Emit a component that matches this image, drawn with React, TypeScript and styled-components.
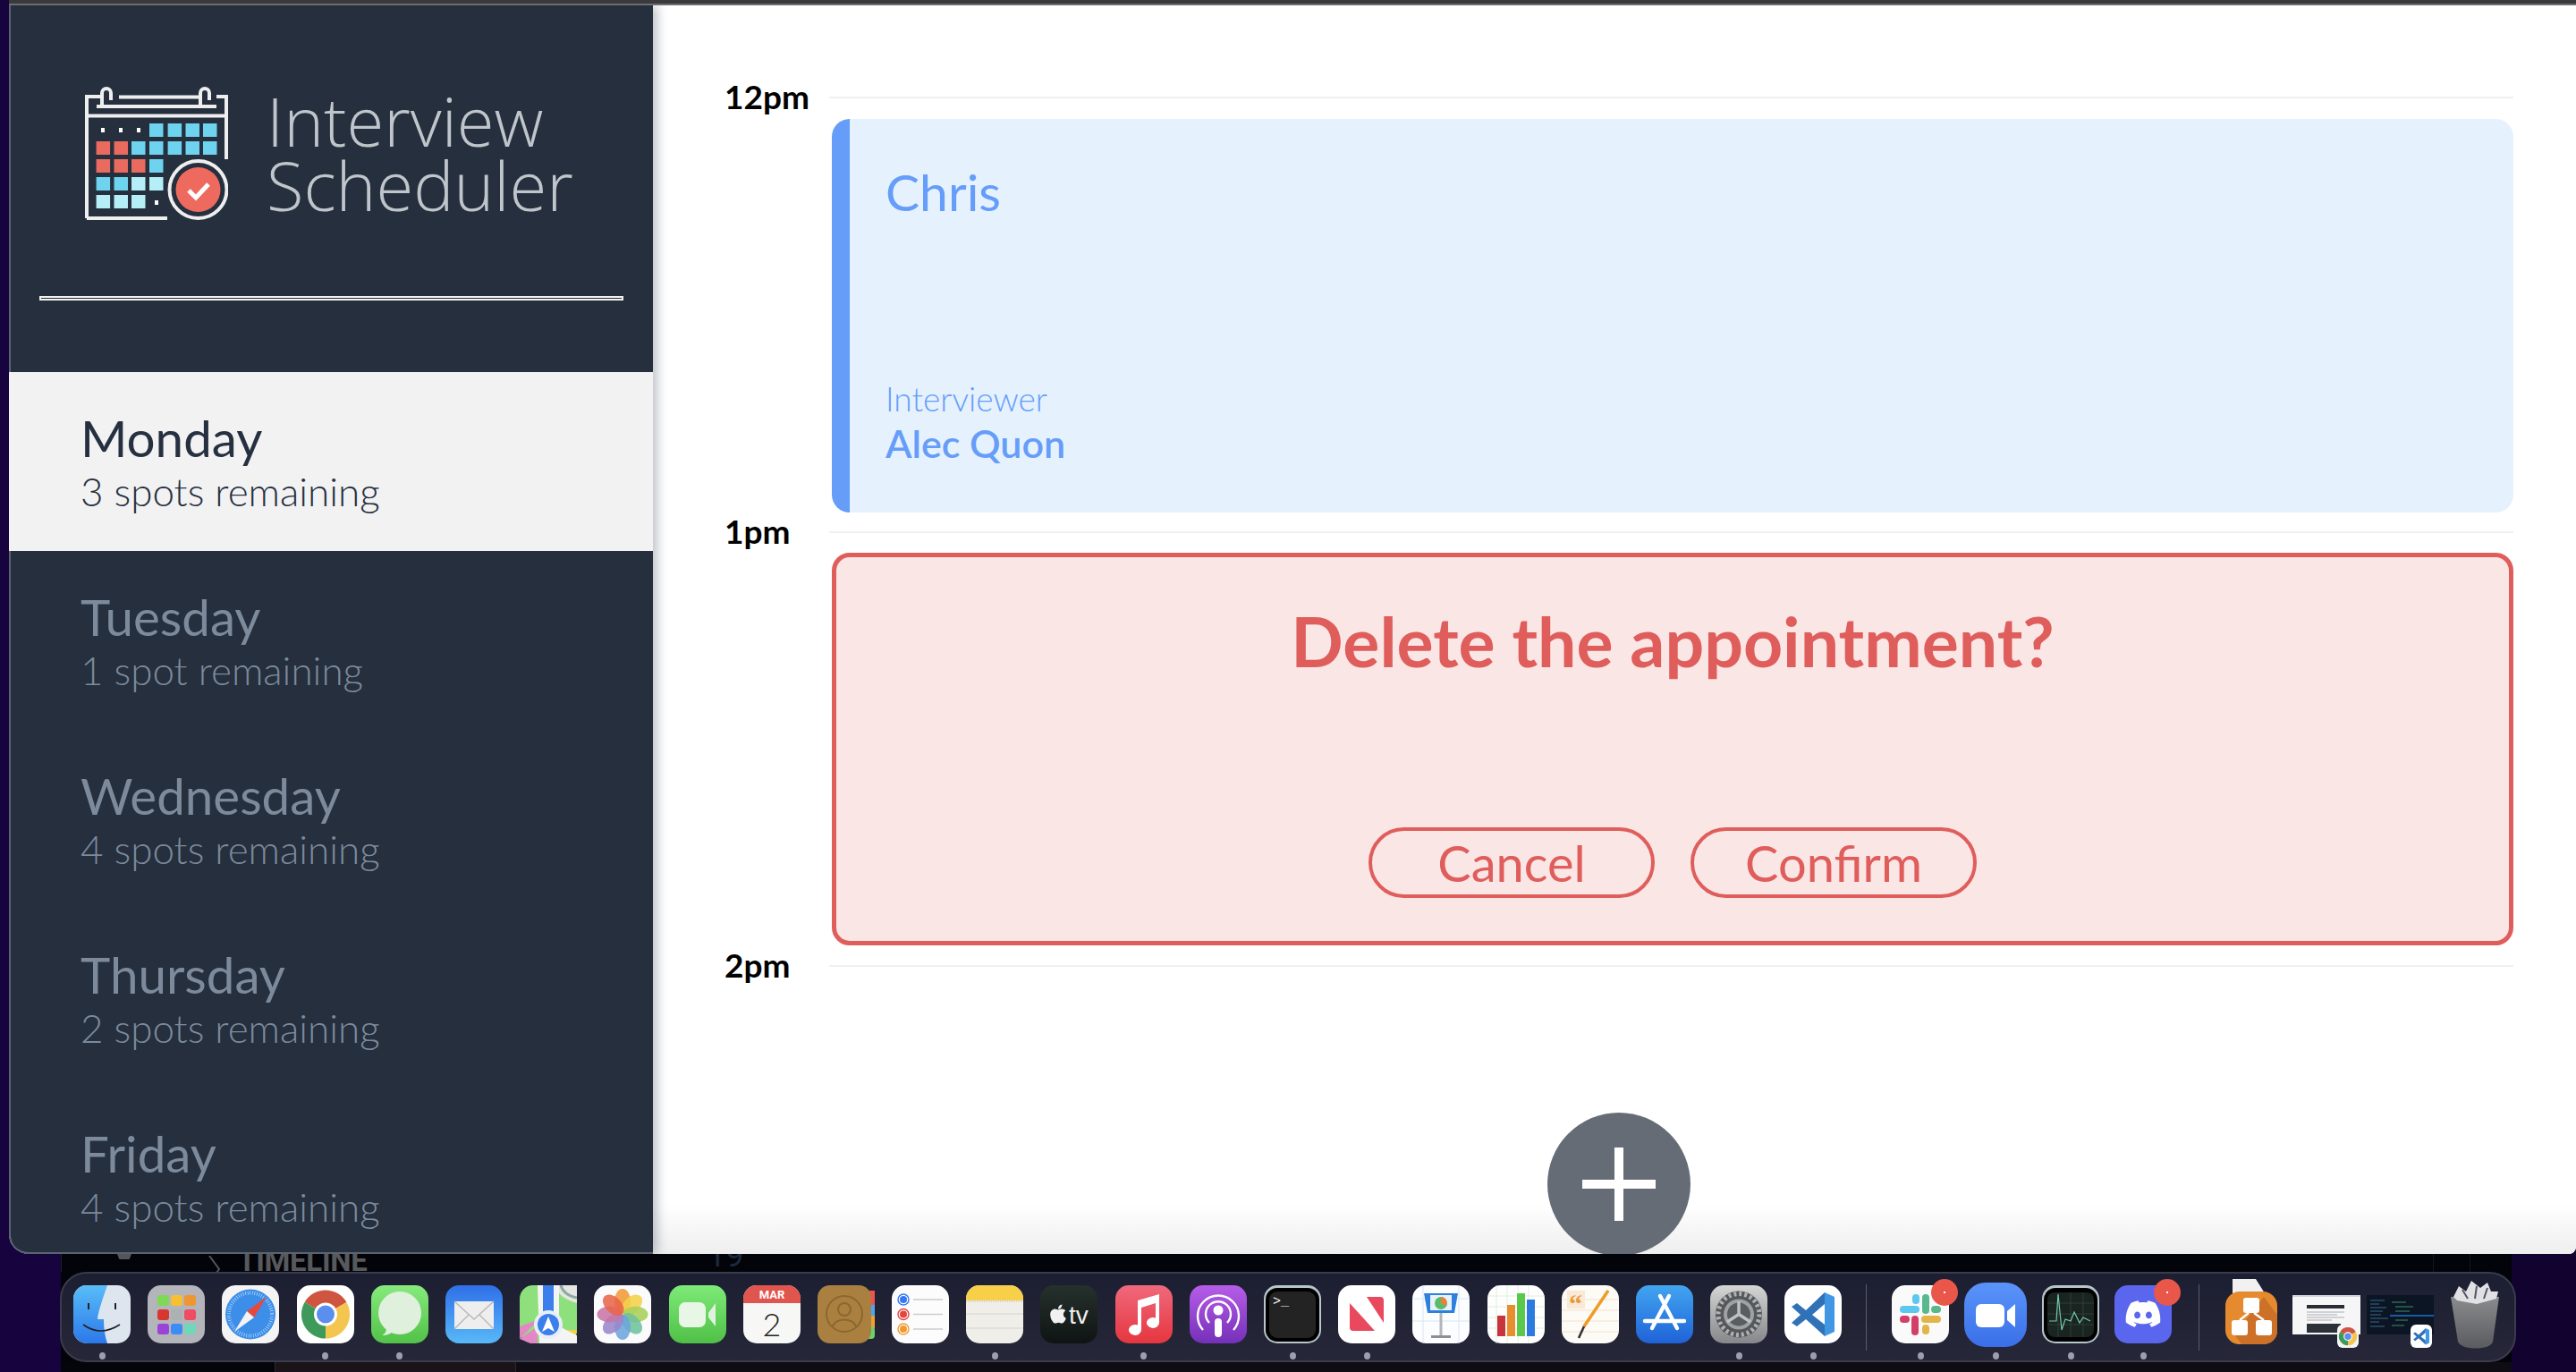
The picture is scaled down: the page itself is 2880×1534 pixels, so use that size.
import React from 'react';
import styled, { createGlobalStyle } from 'styled-components';
import { FaApple, FaDiscord } from 'react-icons/fa';

const GlobalStyle = createGlobalStyle`
  html, body {
    margin: 0;
    padding: 0;
    background: #15033a;
    font-family: Lato, "Noto Sans", sans-serif;
  }
  * { box-sizing: border-box; }
`;

const Desktop = styled.div`
  width: 2880px;
  height: 1534px;
  overflow: hidden;
  background: linear-gradient(90deg, #17033d 0, #12022f 100%);
`;

const MenuEdge = styled.div`
  height: 6px;
  margin-left: 10px;
  background: #3a3a3c;
  border-bottom: 2px solid #6d6d6f;
`;

const Window = styled.div`
  display: flex;
  height: 1396px;
  margin-left: 10px;
  overflow: hidden;
  border-radius: 0 0 8px 22px;
  background: #fff;
`;

const Sidebar = styled.aside`
  position: relative;
  z-index: 1;
  flex: none;
  width: 720px;
  height: 100%;
  overflow: hidden;
  background: #252f3e;
  box-shadow: inset 2px 0 0 #5a6370, inset 0 -2px 0 #5a6370, 5px 0 12px rgba(30, 40, 55, 0.28);
  border-bottom-left-radius: 22px;
`;

const Brand = styled.div`
  display: flex;
  align-items: flex-start;
  gap: 43px;
  height: 325px;
  padding: 90px 0 0 85px;
`;

const BrandName = styled.div`
  margin-top: 3px;
  font-family: "Open Sans", sans-serif;
  font-size: 76px;
  font-weight: 300;
  line-height: 72px;
  color: #bfc5ca;
`;

const Rule = styled.hr`
  width: 653px;
  height: 5px;
  margin: 0 0 80px 34px;
  border: 2px solid #f1f1f1;
  background: #252f3e;
`;

const DayList = styled.ul`
  margin: 0;
  padding: 0;
  list-style: none;
`;

const DayItem = styled.li<{ $selected?: boolean }>`
  height: 200px;
  padding: 39px 0 0 80px;
  color: ${(p) => (p.$selected ? '#263040' : '#7c8a9b')};
  background: ${(p) => (p.$selected ? '#f2f2f2' : 'transparent')};
`;

const DayName = styled.h2`
  margin: 0;
  font-size: 56.5px;
  font-weight: 400;
  line-height: 69px;
`;

const DaySpots = styled.h3`
  margin: 0;
  font-size: 44px;
  font-weight: 300;
  line-height: 50px;
`;

const Main = styled.main`
  flex: 1;
  height: 100%;
  padding: 102px 70px 0 80px;
  background: linear-gradient(180deg, #fff 0, #fff 1340px, #eeeeee 1396px);
`;

const Row = styled.section<{ $height: number }>`
  display: grid;
  grid-template-columns: 117px 1fr;
  height: ${(p) => p.$height}px;
`;

const TimeLabel = styled.h4`
  margin: -22px 0 0;
  font-size: 37px;
  font-weight: 700;
  line-height: 44px;
  color: #000;
`;

const Slot = styled.div`
  border-top: 2px solid #f0f0f0;
  padding: 22.5px 0 0 3px;
`;

const ShowCard = styled.article`
  display: flex;
  flex-direction: column;
  height: 440px;
  padding: 46px 0 50px 40px;
  border-left: 20px solid #659df9;
  border-radius: 20px;
  background: #e6f1fe;
  color: #659df9;
`;

const StudentName = styled.h2`
  margin: 0;
  font-size: 57px;
  font-weight: 400;
  line-height: 70px;
`;

const InterviewerBlock = styled.section`
  margin-top: auto;
`;

const InterviewerLabel = styled.h4`
  margin: 0;
  font-size: 37px;
  font-weight: 300;
  line-height: 46px;
`;

const InterviewerName = styled.h3`
  margin: 0;
  font-size: 43px;
  font-weight: 600;
  line-height: 54px;
`;

const ConfirmCard = styled.article`
  display: flex;
  flex-direction: column;
  align-items: center;
  height: 439px;
  padding: 51px 0 48px;
  border: 5px solid #df5e5c;
  border-radius: 20px;
  background: #fae6e5;
  color: #df5e5c;
`;

const ConfirmTitle = styled.h1`
  margin: 0;
  font-size: 77px;
  font-weight: 700;
  line-height: 84px;
`;

const Actions = styled.div`
  display: flex;
  gap: 40px;
  margin-top: auto;
`;

const ActionButton = styled.button`
  width: 320px;
  height: 79px;
  padding: 0;
  border: 4.5px solid #df5e5c;
  border-radius: 40px;
  background: transparent;
  color: #df5e5c;
  font-family: inherit;
  font-size: 56px;
  line-height: 1;
`;

const AddButton = styled.button`
  display: flex;
  align-items: center;
  justify-content: center;
  width: 160px;
  height: 160px;
  margin-left: 920px;
  padding: 0;
  border: 0;
  border-radius: 50%;
  background: #666c76;
`;

const Editor = styled.div`
  height: 132px;
  margin: 0 72px 0 68px;
  background: #02040a;
`;

const BackStrip = styled.div`
  position: relative;
  height: 20px;
  overflow: hidden;
  border-left: 1px solid #1d2026;
  background:
    linear-gradient(#14161c, #14161c) 2651px 0 / 1px 100% no-repeat,
    linear-gradient(#14161c, #14161c) 2692px 0 / 1px 100% no-repeat;
`;

const Tick = styled.span`
  position: absolute;
  left: 62px;
  top: 0;
  width: 16px;
  height: 6px;
  background: #55565a;
  clip-path: polygon(0 0, 100% 0, 85% 100%, 15% 100%);
`;

const Chevron = styled.svg`
  position: absolute;
  left: 164px;
  top: 2px;
  width: 14px;
  height: 30px;
`;

const Crumb = styled.span`
  position: absolute;
  left: 197px;
  top: -5px;
  font-family: Roboto, sans-serif;
  font-size: 33px;
  font-weight: 700;
  line-height: 26px;
  letter-spacing: -0.3px;
  color: #58595c;
`;

const LineNumber = styled.span`
  position: absolute;
  left: 722px;
  top: -18px;
  font-family: Roboto, sans-serif;
  font-size: 36px;
  line-height: 40px;
  color: #1c2a3b;
`;

const Dock = styled.nav`
  display: flex;
  height: 101px;
  margin: 0 -5px 0 -1px;
  padding-left: 13px;
  border: 2px solid #3a3c4d;
  border-radius: 30px;
  background: linear-gradient(180deg, #1c1e31 0, #262839 100%);
`;

const DockGroup = styled.div<{ $gap: number }>`
  display: flex;
  gap: ${(p) => p.$gap}px;
`;

const DockSlot = styled.div<{ $top: number; $after?: number }>`
  position: relative;
  flex: none;
  padding-top: ${(p) => p.$top}px;
  margin-right: ${(p) => p.$after || 0}px;
`;

const Indicator = styled.span`
  position: absolute;
  left: 50%;
  top: 88px;
  width: 7px;
  height: 8px;
  margin-left: -3.5px;
  border-radius: 50%;
  background: #9c9eb2;
`;

const Badge = styled.span`
  position: absolute;
  right: -10px;
  top: 6px;
  width: 30px;
  height: 30px;
  border-radius: 50%;
  background: #e8574a;
  &::after {
    content: '';
    position: absolute;
    left: 14px;
    top: 14px;
    width: 2px;
    height: 2px;
    background: #fff;
  }
`;

const DockDivider = styled.div<{ $left: number; $right: number }>`
  flex: none;
  width: 1px;
  height: 74px;
  margin: 12px ${(p) => p.$right}px 0 ${(p) => p.$left}px;
  background: #5a5c6c;
`;

const Under = styled.div`
  display: grid;
  grid-template-columns: 240px 269px 1fr;
  height: 11px;
  & > span { border-right: 1px solid #2a2a2e; }
  & > span:nth-child(1) { background: #03050b; }
  & > span:nth-child(2) { background: #1a1418; }
  & > span:nth-child(3) { background: #100c13; border: 0; }
`;

function Logo() {
  const xs = [12.6, 32.5, 52, 72, 92.6, 112.5, 132];
  const ys = [42, 62, 82, 102, 122];
  const blue = '#6dd3ee';
  const red = '#e96a5f';
  const light = '#b6eef8';
  const cells: [number, number, string][] = [
    [3, 0, blue], [4, 0, blue], [5, 0, blue], [6, 0, blue],
    [0, 1, red], [1, 1, red], [2, 1, blue], [3, 1, blue], [4, 1, blue], [5, 1, blue], [6, 1, blue],
    [0, 2, red], [1, 2, red], [2, 2, red], [3, 2, blue],
    [0, 3, blue], [1, 3, blue], [2, 3, light], [3, 3, light],
    [0, 4, light], [1, 4, light], [2, 4, light],
  ];
  const line = '#eeeeee';
  return (
    <svg width="160" height="150" viewBox="0 0 160 150" style={{ flex: 'none' }}>
      {cells.map(([c, r, fill]) => (
        <rect key={`${c}-${r}`} x={xs[c]} y={ys[r]} width="15.5" height="15" fill={fill} />
      ))}
      <rect x="18" y="47" width="4" height="5" fill="#fff" />
      <rect x="38" y="47" width="4" height="5" fill="#fff" />
      <rect x="58" y="47" width="4" height="5" fill="#fff" />
      <rect x="78" y="128" width="4" height="5" fill="#fff" />
      <path d="M2 148V12H17M38 12.5H128M147 12H158V82M2 33.5H158M13 23H147" fill="none" stroke={line} strokeWidth="4" />
      <path d="M2 148H92" stroke={line} strokeWidth="4" />
      <path d="M19 22V8a5 5 0 0 1 10 0V16M129 22V8a5 5 0 0 1 10 0V16" fill="none" stroke={line} strokeWidth="4" />
      <circle cx="126.5" cy="116" r="32" fill="#252f3e" stroke={line} strokeWidth="4" />
      <circle cx="126.5" cy="116" r="25" fill="#ee6a5f" />
      <path d="M116 117l8 8 14-15" fill="none" stroke="#fff" strokeWidth="5" />
    </svg>
  );
}

const Tile = ({ fill, rx = 15 }: { fill: string; rx?: number }) => <rect width="64" height="65" rx={rx} fill={fill} />;

const Grad = ({ id, from, to }: { id: string; from: string; to: string }) => (
  <defs>
    <linearGradient id={id} x1="0" y1="0" x2="0" y2="1">
      <stop offset="0" stopColor={from} />
      <stop offset="1" stopColor={to} />
    </linearGradient>
  </defs>
);

const Icon = ({ w = 64, h = 65, children }: { w?: number; h?: number; children: React.ReactNode }) => (
  <svg width={w} height={h} viewBox={`0 0 ${w} ${h}`} style={{ display: 'block' }}>
    {children}
  </svg>
);

const VsMark = () => (
  <>
    <path d="M45 8L24 28L14 20L8 24L18 33L8 42L14 46L24 38L45 57V44L31 33L45 21Z" fill="#2f72b8" />
    <path d="M45 8L56 13V52L45 57Z" fill="#4297e4" />
  </>
);

const ChromeMark = () => (
  <>
    <path d="M32 32.5L8.6 19A27 27 0 0 1 55.4 19Z" fill="#cf5540" />
    <path d="M32 32.5L55.4 19A27 27 0 0 1 32 59.5Z" fill="#f4c64f" />
    <path d="M32 32.5L32 59.5A27 27 0 0 1 8.6 19Z" fill="#3e9a5a" />
    <circle cx="32" cy="32.5" r="13" fill="#fff" />
    <circle cx="32" cy="32.5" r="10" fill="#5a8ff0" />
  </>
);

const petals = ['#f09a37', '#f4d24a', '#a8cf5a', '#6fc19c', '#6ca5dc', '#9a86c9', '#c875a5', '#e8654a'];

const dockMain: { key: string; dot?: boolean; node: React.ReactNode }[] = [
  {
    key: 'finder',
    dot: true,
    node: (
      <Icon>
        <Grad id="finder" from="#58bdf8" to="#2c78ea" />
        <Tile fill="#dde5ee" />
        <path d="M15 0H38C33 15 28 28 27 38H34C34 48 35 56 38 65H15A15 15 0 0 1 0 50V15A15 15 0 0 1 15 0Z" fill="url(#finder)" />
        <path d="M17 20V27M47 20V27" stroke="#222" strokeWidth="2" />
        <path d="M11 44Q30 58 52 44" fill="none" stroke="#222" strokeWidth="1.6" />
      </Icon>
    ),
  },
  {
    key: 'launchpad',
    node: (
      <Icon>
        <Tile fill="#b4b4bb" />
        {['#7ed957', '#f5c032', '#ee9631', '#d9362f', '#aab2b2', '#ee4d63', '#9a43d8', '#3b8df5', '#6fd8b8'].map((c, i) => (
          <rect key={c} x={11 + (i % 3) * 15} y={11 + Math.floor(i / 3) * 16} width="13" height="12" rx="3" fill={c} />
        ))}
      </Icon>
    ),
  },
  {
    key: 'safari',
    node: (
      <Icon>
        <Tile fill="#f4f4f4" />
        <circle cx="32" cy="32.5" r="28" fill="#3d8ee8" />
        <circle cx="32" cy="32.5" r="24" fill="none" stroke="#d8ecff" strokeWidth="4" strokeDasharray="0.6 2" />
        <polygon points="50,13 36,36 28,29" fill="#e8483c" />
        <polygon points="14,52 36,36 28,29" fill="#f3f3f3" />
      </Icon>
    ),
  },
  {
    key: 'chrome',
    dot: true,
    node: (
      <Icon>
        <Tile fill="#fff" />
        <ChromeMark />
      </Icon>
    ),
  },
  {
    key: 'messages',
    dot: true,
    node: (
      <Icon>
        <Grad id="messages" from="#86ea7c" to="#52c248" />
        <Tile fill="url(#messages)" />
        <ellipse cx="32" cy="31" rx="24" ry="24" fill="#dff0dc" />
        <path d="M17 48C17 52 15 55 12 56C18 56 22 54 25 51Z" fill="#dff0dc" />
      </Icon>
    ),
  },
  {
    key: 'mail',
    node: (
      <Icon>
        <Grad id="mail" from="#2f6fe8" to="#58b8f8" />
        <Tile fill="url(#mail)" />
        <rect x="10" y="18" width="44" height="31" rx="2" fill="#eeeeee" />
        <path d="M10 18L32 38L54 18M10 49L26 33M54 49L38 33" fill="none" stroke="#b8b8b8" strokeWidth="1.4" />
      </Icon>
    ),
  },
  {
    key: 'maps',
    node: (
      <Icon>
        <Tile fill="#8ee07c" />
        <path d="M0 46L22 38L0 60ZM0 60L20 46V65H12Z" fill="#e388c4" />
        <path d="M38 50H64V50A15 15 0 0 1 50 65H38Z" fill="#f3cf45" />
        <path d="M40 0H64V20C50 16 42 10 40 0Z" fill="#e3e6e3" />
        <path d="M46 0C48 8 54 12 64 14" fill="none" stroke="#8ea9a0" strokeWidth="3" />
        <path d="M20 0H44V65H38L22 65Z" fill="#f4f4f4" />
        <rect x="26" y="0" width="12" height="34" fill="#3b7fec" />
        <path d="M40 44L64 56V65H44Z" fill="#f4f4f4" />
        <circle cx="32" cy="44" r="16" fill="#e8eef6" />
        <circle cx="32" cy="44" r="12" fill="#3b7fec" />
        <path d="M32 35L39 52L32 48L25 52Z" fill="#fff" />
      </Icon>
    ),
  },
  {
    key: 'photos',
    node: (
      <Icon>
        <Tile fill="#fbfbfb" />
        {petals.map((c, i) => (
          <ellipse key={c} cx="32" cy="18" rx="9" ry="14" fill={c} opacity="0.88" transform={`rotate(${i * 45} 32 32.5)`} />
        ))}
      </Icon>
    ),
  },
  {
    key: 'facetime',
    node: (
      <Icon>
        <Grad id="ft" from="#7eea78" to="#4fc047" />
        <Tile fill="url(#ft)" />
        <rect x="11" y="19" width="30" height="28" rx="7" fill="#e8f6e6" />
        <path d="M44 31L52 20V46L44 36Z" fill="#e0f2de" />
      </Icon>
    ),
  },
  {
    key: 'calendar',
    node: (
      <Icon>
        <Tile fill="#f7f7f5" />
        <path d="M15 0H49A15 15 0 0 1 64 15V20H0V15A15 15 0 0 1 15 0Z" fill="#e0554d" />
        <text x="32" y="15" textAnchor="middle" fontSize="13" fontWeight="700" fill="#fff" fontFamily="Roboto">MAR</text>
        <text x="32" y="57" textAnchor="middle" fontSize="36" fontWeight="300" fill="#222" fontFamily="Lato">2</text>
      </Icon>
    ),
  },
  {
    key: 'contacts',
    node: (
      <Icon>
        <rect x="50" y="6" width="14" height="18" fill="#ef5350" />
        <rect x="50" y="22" width="14" height="14" fill="#4aa5ef" />
        <rect x="50" y="34" width="14" height="14" fill="#f0a030" />
        <rect x="50" y="46" width="14" height="14" rx="4" fill="#6fcf6a" />
        <rect width="60" height="65" rx="14" fill="#a9803f" />
        <circle cx="30" cy="32" r="20" fill="none" stroke="#8b6730" strokeWidth="2" />
        <circle cx="30" cy="27" r="7" fill="none" stroke="#8b6730" strokeWidth="2" />
        <path d="M17 46C20 36 40 36 43 46" fill="none" stroke="#8b6730" strokeWidth="2" />
      </Icon>
    ),
  },
  {
    key: 'reminders',
    node: (
      <Icon>
        <Tile fill="#fcfcfc" />
        {[['#3478f6', 16], ['#e5453d', 32.5], ['#ef9a2f', 49]].map(([c, y]) => (
          <g key={c as string}>
            <circle cx="13" cy={y as number} r="6" fill="none" stroke={c as string} strokeWidth="1.4" />
            <circle cx="13" cy={y as number} r="4" fill={c as string} />
            <path d={`M24 ${y}H57`} stroke="#cccccc" strokeWidth="1.6" />
          </g>
        ))}
      </Icon>
    ),
  },
  {
    key: 'notes',
    dot: true,
    node: (
      <Icon>
        <Tile fill="#efeee8" />
        <path d="M15 0H49A15 15 0 0 1 64 15V17H0V15A15 15 0 0 1 15 0Z" fill="#f8cf48" />
        <path d="M0 18H64" stroke="#bcbbb4" strokeWidth="1" strokeDasharray="1 1" />
        <path d="M0 32H64M0 48H64" stroke="#dddcd6" strokeWidth="1.4" />
      </Icon>
    ),
  },
  {
    key: 'tv',
    node: (
      <Icon>
        <Grad id="tv" from="#26312c" to="#0f1412" />
        <Tile fill="url(#tv)" />
        <FaApple x={8} y={20} size={24} color="#f1f1f1" />
        <text x="32" y="43" fontSize="28" fill="#efefef" fontFamily="Liberation Sans">tv</text>
      </Icon>
    ),
  },
  {
    key: 'music',
    dot: true,
    node: (
      <Icon>
        <Grad id="music" from="#f0697c" to="#e5363f" />
        <Tile fill="url(#music)" />
        <path d="M25 17L49 10V42A7 6 0 1 1 45 36.5V20L29 25V50A7 6 0 1 1 25 44.5Z" fill="#fff" />
      </Icon>
    ),
  },
  {
    key: 'podcasts',
    node: (
      <Icon>
        <Grad id="pod" from="#b65de8" to="#7530b8" />
        <Tile fill="url(#pod)" />
        <path d="M15 50A23 23 0 1 1 49 50M22 42A14 14 0 1 1 42 42" fill="none" stroke="#fff" strokeWidth="2.4" />
        <circle cx="32" cy="28" r="5.5" fill="#fff" />
        <rect x="28" y="37" width="8" height="21" rx="4" fill="#fff" />
      </Icon>
    ),
  },
  {
    key: 'terminal',
    dot: true,
    node: (
      <Icon>
        <Tile fill="#b8c6cc" />
        <rect x="2" y="3" width="60" height="60" rx="13" fill="#000" />
        <rect x="6" y="7" width="52" height="52" rx="9" fill="#232323" />
        <text x="10" y="22" fontSize="15" fill="#fff" fontFamily="Liberation Mono">{'>_'}</text>
      </Icon>
    ),
  },
  {
    key: 'news',
    dot: true,
    node: (
      <Icon>
        <Tile fill="#fff" />
        <rect x="13" y="13" width="38" height="38" rx="4" fill="#e9495d" />
        <polygon points="19,13 32,13 51,42 51,51 41,51 13,20 13,13" fill="#fff" />
      </Icon>
    ),
  },
  {
    key: 'keynote',
    node: (
      <Icon>
        <Tile fill="#fbfdff" />
        <path d="M0 15H64M0 40H64M12 0V65M52 0V65" stroke="#d8e6f3" strokeWidth="1" />
        <polygon points="13,9 51,9 47,31 17,31" fill="#2f7fe0" />
        <rect x="20" y="11" width="24" height="17" fill="#e8f2fb" />
        <circle cx="32" cy="20" r="7" fill="#5cbb6a" />
        <path d="M32 20V13A7 7 0 0 1 38 23Z" fill="#ee7d3a" />
        <rect x="30.5" y="31" width="3" height="26" fill="#b0b6bc" />
        <rect x="21" y="56" width="22" height="3" fill="#8d8f92" />
      </Icon>
    ),
  },
  {
    key: 'numbers',
    node: (
      <Icon>
        <Tile fill="#fdfefd" />
        <path d="M0 12H64M0 24H64M0 36H64M0 48H64M10 0V65M22 0V65M34 0V65M46 0V65" stroke="#d8edd6" strokeWidth="0.8" />
        <rect x="11" y="34" width="9" height="23" fill="#c8333d" />
        <rect x="22" y="22" width="9" height="35" fill="#e78f2f" />
        <rect x="33" y="9" width="9" height="48" fill="#5ac84c" />
        <rect x="44" y="16" width="9" height="41" fill="#2c79e0" />
      </Icon>
    ),
  },
  {
    key: 'pages',
    node: (
      <Icon>
        <Tile fill="#fcfbf6" />
        <path d="M0 16H64M0 28H64M0 40H64M0 52H64" stroke="#f7dcc0" strokeWidth="0.8" />
        <rect x="6" y="6" width="20" height="20" fill="#f9e9d6" />
        <text x="8" y="31" fontSize="30" fontWeight="700" fill="#ea9a3a" fontFamily="Liberation Serif">“</text>
        <path d="M52 6L25 46" stroke="#ee9b28" strokeWidth="3.6" />
        <path d="M25 46L19 59" stroke="#333" strokeWidth="2.6" />
      </Icon>
    ),
  },
  {
    key: 'appstore',
    node: (
      <Icon>
        <Grad id="as" from="#42a5f0" to="#1f62d8" />
        <Tile fill="url(#as)" />
        <path d="M37 12L18 48M27 12L46 48M10 40H54" stroke="#fff" strokeWidth="4.4" strokeLinecap="round" fill="none" />
      </Icon>
    ),
  },
  {
    key: 'prefs',
    dot: true,
    node: (
      <Icon>
        <Grad id="pf" from="#d4d6d4" to="#85878a" />
        <Tile fill="url(#pf)" />
        <circle cx="32" cy="32.5" r="26" fill="#55585a" />
        <circle cx="32" cy="32.5" r="23" fill="none" stroke="#b0b3b3" strokeWidth="5" strokeDasharray="3 3" />
        <circle cx="32" cy="32.5" r="17" fill="#9ea2a3" />
        <circle cx="32" cy="32.5" r="13" fill="#5a5d60" />
        <path d="M32 32.5V18M32 32.5L19 41M32 32.5L45 41" stroke="#bfc2c2" strokeWidth="3.4" />
      </Icon>
    ),
  },
  {
    key: 'vscode',
    dot: true,
    node: (
      <Icon>
        <Tile fill="#fff" />
        <VsMark />
      </Icon>
    ),
  },
];

export default function App() {
  return (
    <Desktop>
      <GlobalStyle />
      <MenuEdge />
      <Window>
        <Sidebar>
          <Brand>
            <Logo />
            <BrandName>
              Interview
              <br />
              Scheduler
            </BrandName>
          </Brand>
          <Rule />
          <DayList>
            <DayItem $selected>
              <DayName>Monday</DayName>
              <DaySpots>3 spots remaining</DaySpots>
            </DayItem>
            <DayItem>
              <DayName>Tuesday</DayName>
              <DaySpots>1 spot remaining</DaySpots>
            </DayItem>
            <DayItem>
              <DayName>Wednesday</DayName>
              <DaySpots>4 spots remaining</DaySpots>
            </DayItem>
            <DayItem>
              <DayName>Thursday</DayName>
              <DaySpots>2 spots remaining</DaySpots>
            </DayItem>
            <DayItem>
              <DayName>Friday</DayName>
              <DaySpots>4 spots remaining</DaySpots>
            </DayItem>
          </DayList>
        </Sidebar>
        <Main>
          <Row $height={485.5}>
            <TimeLabel>12pm</TimeLabel>
            <Slot>
              <ShowCard>
                <StudentName>Chris</StudentName>
                <InterviewerBlock>
                  <InterviewerLabel>Interviewer</InterviewerLabel>
                  <InterviewerName>Alec Quon</InterviewerName>
                </InterviewerBlock>
              </ShowCard>
            </Slot>
          </Row>
          <Row $height={485.5}>
            <TimeLabel>1pm</TimeLabel>
            <Slot>
              <ConfirmCard>
                <ConfirmTitle>Delete the appointment?</ConfirmTitle>
                <Actions>
                  <ActionButton>Cancel</ActionButton>
                  <ActionButton>Confirm</ActionButton>
                </Actions>
              </ConfirmCard>
            </Slot>
          </Row>
          <Row $height={165}>
            <TimeLabel>2pm</TimeLabel>
            <Slot />
          </Row>
          <AddButton aria-label="Add">
            <svg width="82" height="82" viewBox="0 0 82 82">
              <path d="M41 0V82M0 41H82" stroke="#fff" strokeWidth="10" />
            </svg>
          </AddButton>
        </Main>
      </Window>
      <Editor>
        <BackStrip>
          <Tick />
          <Chevron viewBox="0 0 14 30">
            <path d="M1 0L12 15L1 30" fill="none" stroke="#55565a" strokeWidth="2" />
          </Chevron>
          <Crumb>TIMELINE</Crumb>
          <LineNumber>19</LineNumber>
        </BackStrip>
        <Dock>
          <DockGroup $gap={19.2}>
            {dockMain.map((app) => (
              <DockSlot key={app.key} $top={13}>
                {app.node}
                {app.dot && <Indicator />}
              </DockSlot>
            ))}
          </DockGroup>
          <DockDivider $left={27} $right={28} />
          <DockGroup $gap={17}>
            <DockSlot $top={13}>
              <Icon>
                <Tile fill="#fafafa" />
                <rect x="9" y="23" width="22" height="8" rx="4" fill="#5cc8ef" />
                <rect x="23" y="10" width="8" height="11" rx="4" fill="#5cc8ef" />
                <rect x="34" y="10" width="8" height="22" rx="4" fill="#58b98c" />
                <rect x="44" y="23" width="11" height="8" rx="4" fill="#58b98c" />
                <rect x="33" y="34" width="22" height="8" rx="4" fill="#e3b548" />
                <rect x="34" y="44" width="8" height="11" rx="4" fill="#e3b548" />
                <rect x="22" y="34" width="8" height="22" rx="4" fill="#d23f67" />
                <rect x="9" y="34" width="11" height="8" rx="4" fill="#d23f67" />
              </Icon>
              <Badge />
              <Indicator />
            </DockSlot>
            <DockSlot $top={10}>
              <Icon w={70} h={72}>
                <Grad id="zm" from="#5a94f9" to="#3a6fe8" />
                <rect width="70" height="72" rx="24" fill="url(#zm)" />
                <rect x="13" y="24" width="32" height="26" rx="6" fill="#fff" />
                <path d="M48 32L57 24V50L48 42Z" fill="#fff" />
              </Icon>
              <Indicator />
            </DockSlot>
            <DockSlot $top={13}>
              <Icon>
                <Tile fill="#b6c6cb" />
                <rect x="2" y="3" width="60" height="60" rx="13" fill="#000" />
                <rect x="6" y="8" width="52" height="50" rx="8" fill="#1a2420" />
                <path d="M6 20H58M6 32H58M6 44H58M18 8V58M32 8V58M46 8V58" stroke="#33473f" strokeWidth="0.8" />
                <path d="M8 40H16L18 10L22 50L26 38L32 40L36 30L42 42L46 36L54 40" fill="none" stroke="#72c8ae" strokeWidth="1.2" />
              </Icon>
              <Indicator />
            </DockSlot>
            <DockSlot $top={13}>
              <Icon>
                <Tile fill="#5b66ee" />
                <FaDiscord x={11} y={11} size={42} color="#fff" />
              </Icon>
              <Badge />
              <Indicator />
            </DockSlot>
          </DockGroup>
          <DockDivider $left={30} $right={29} />
          <DockGroup $gap={7}>
            <DockSlot $top={6} $after={10}>
              <Icon w={58} h={73}>
                <path d="M8 0H34L44 16H8Z" fill="#f1f1f1" />
                <path d="M16 14H42A16 16 0 0 1 58 30V58A15 15 0 0 1 43 73H16A16 16 0 0 1 0 58V30A16 16 0 0 1 16 14Z" fill="#e58a2e" />
                <path d="M43 20L58 40V58A15 15 0 0 1 43 73H18L10 62Z" fill="#cd7129" />
                <rect x="20" y="21" width="18" height="17" rx="3" fill="#fff" />
                <rect x="7" y="46" width="18" height="17" rx="3" fill="#fff" />
                <rect x="34" y="46" width="18" height="17" rx="3" fill="#fff" />
                <path d="M26 38L16 46M32 38L43 46" stroke="#fff" strokeWidth="2.4" />
              </Icon>
            </DockSlot>
            <DockSlot $top={13}>
              <Icon w={76} h={70}>
                <rect y="11" width="76" height="44" fill="#f6f6f6" />
                <rect y="11" width="76" height="2" fill="#cfd4dc" />
                <rect x="16" y="22" width="42" height="4" fill="#2a2d33" />
                <path d="M16 30H58M16 33H50M16 36H58M16 39H44" stroke="#a9acb2" strokeWidth="1" />
                <rect x="16" y="43" width="38" height="10" fill="#2c3038" />
                <rect x="50" y="44" width="24" height="26" rx="6" fill="#f5f5f5" />
                <g transform="translate(50 45) scale(0.375)">
                  <ChromeMark />
                </g>
              </Icon>
            </DockSlot>
            <DockSlot $top={13} $after={11}>
              <Icon w={75} h={70}>
                <rect y="11" width="75" height="44" fill="#0b1524" />
                <path d="M4 17H20M4 21H14M4 25H22M4 29H18M4 33H16M4 37H24M4 41H14M4 46H20" stroke="#3f6d8c" strokeWidth="1" />
                <path d="M28 19H44M32 24H52M32 29H48M28 34H60M32 39H46M28 45H42" stroke="#3f8f6c" strokeWidth="1" />
                <rect x="26" y="33" width="49" height="2" fill="#1c5aa0" />
                <rect x="49" y="44" width="24" height="26" rx="6" fill="#fff" />
                <g transform="translate(49 45) scale(0.375)">
                  <VsMark />
                </g>
              </Icon>
            </DockSlot>
            <DockSlot $top={8}>
              <Icon w={56} h={76}>
                <Grad id="bin" from="#8a8b8d" to="#5a5b5e" />
                <path d="M1 18H55L48 68C46 78 12 78 9 68Z" fill="url(#bin)" />
                <path d="M4 18L10 6L18 12L24 0L34 8L42 2L46 12L54 12L52 20L30 26L8 22Z" fill="#dfe1e3" />
                <path d="M14 10L20 20M30 6L28 20M42 8L38 20" stroke="#556" strokeWidth="2" />
              </Icon>
            </DockSlot>
          </DockGroup>
        </Dock>
        <Under>
          <span />
          <span />
          <span />
        </Under>
      </Editor>
    </Desktop>
  );
}
